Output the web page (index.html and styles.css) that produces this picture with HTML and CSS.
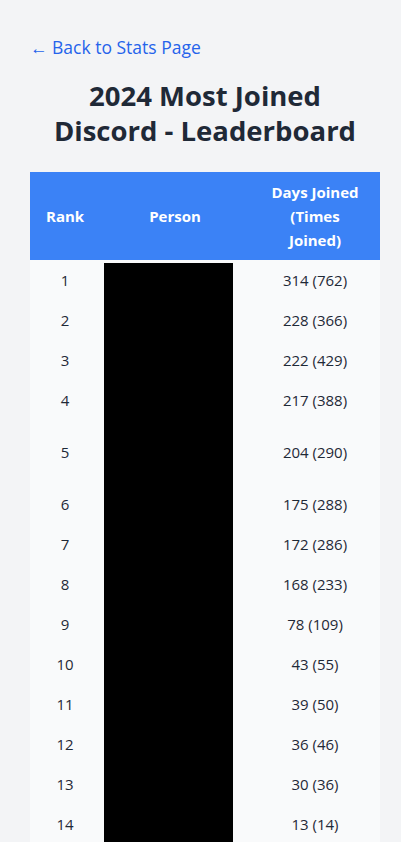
FILE: index.html
```html
<!DOCTYPE html>
<html lang="en">
<head>
    <meta charset="UTF-8" />
    <meta name="viewport" content="width=device-width, initial-scale=1.0" />
    <title>2024 Most Joined Discord - Leaderboard</title>
    <link rel="stylesheet" href="styles.css">
</head>
<body>
    <div class="page">
        <a class="back-link" href="#">&larr; Back to Stats Page</a>
        <h1>2024 Most Joined Discord - Leaderboard</h1>

        <div class="table-wrap">
            <table class="leaderboard">
                <thead>
                    <tr>
                        <th class="col-rank">Rank</th>
                        <th class="col-person">Person</th>
                        <th class="col-days">Days Joined (Times Joined)</th>
                    </tr>
                </thead>
                <tbody>
                    <tr><td>1</td><td></td><td>314 (762)</td></tr>
                    <tr><td>2</td><td></td><td>228 (366)</td></tr>
                    <tr><td>3</td><td></td><td>222 (429)</td></tr>
                    <tr><td>4</td><td></td><td>217 (388)</td></tr>
                    <tr class="tall"><td>5</td><td></td><td>204 (290)</td></tr>
                    <tr><td>6</td><td></td><td>175 (288)</td></tr>
                    <tr><td>7</td><td></td><td>172 (286)</td></tr>
                    <tr><td>8</td><td></td><td>168 (233)</td></tr>
                    <tr><td>9</td><td></td><td>78 (109)</td></tr>
                    <tr><td>10</td><td></td><td>43 (55)</td></tr>
                    <tr><td>11</td><td></td><td>39 (50)</td></tr>
                    <tr><td>12</td><td></td><td>36 (46)</td></tr>
                    <tr><td>13</td><td></td><td>30 (36)</td></tr>
                    <tr><td>14</td><td></td><td>13 (14)</td></tr>
                </tbody>
            </table>
            <!-- names are blacked out -->
            <div class="redacted"></div>
        </div>
    </div>
</body>
</html>
```

FILE: styles.css
```css
body {
    margin: 0;
    font-family: 'Open Sans', 'Noto Sans', sans-serif;
    background-color: #f3f4f6;
    color: #1f2937;
}

.page {
    padding: 33px 21px 0 30px;
}

.back-link {
    display: inline-block;
    color: #2563eb;
    text-decoration: none;
    font-size: 17.5px;
    line-height: 28px;
}

h1 {
    margin: 17px 0 24px 0;
    padding: 0 20px;
    text-align: center;
    font-size: 27.5px;
    line-height: 35px;
    font-weight: 700;
    color: #1f2937;
}

.table-wrap {
    position: relative;
    width: 350px;
}

.leaderboard {
    width: 350px;
    border-collapse: collapse;
    table-layout: fixed;
    font-size: 15px;
    line-height: 24px;
}

.leaderboard th,
.leaderboard td {
    box-sizing: border-box;
    padding: 8px 16px;
    text-align: center;
}

.leaderboard th {
    background-color: #3b82f6;
    color: #fff;
    font-weight: 700;
}

.leaderboard td {
    background-color: #f9fafb;
}

.leaderboard tr.tall td {
    height: 64px;
}

.col-rank { width: 70px; }
.col-person { width: 150px; }
.col-days { width: 130px; }

.redacted {
    position: absolute;
    left: 74px;
    top: 91px;
    bottom: 0;
    width: 129px;
    background: #000;
}
```
